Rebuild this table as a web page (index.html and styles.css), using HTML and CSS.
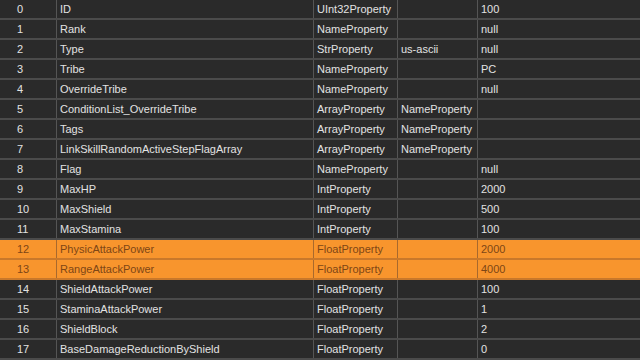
FILE: index.html
```html
<!DOCTYPE html>
<html>
<head>
<meta charset="utf-8">
<link rel="stylesheet" href="styles.css">
</head>
<body>
<div class="table">
  <div class="row"><div class="c idx">0</div><div class="c">ID</div><div class="c">UInt32Property</div><div class="c"></div><div class="c">100</div></div>
  <div class="row"><div class="c idx">1</div><div class="c">Rank</div><div class="c">NameProperty</div><div class="c"></div><div class="c">null</div></div>
  <div class="row"><div class="c idx">2</div><div class="c">Type</div><div class="c">StrProperty</div><div class="c">us-ascii</div><div class="c">null</div></div>
  <div class="row"><div class="c idx">3</div><div class="c">Tribe</div><div class="c">NameProperty</div><div class="c"></div><div class="c">PC</div></div>
  <div class="row"><div class="c idx">4</div><div class="c">OverrideTribe</div><div class="c">NameProperty</div><div class="c"></div><div class="c">null</div></div>
  <div class="row"><div class="c idx">5</div><div class="c">ConditionList_OverrideTribe</div><div class="c">ArrayProperty</div><div class="c">NameProperty</div><div class="c"></div></div>
  <div class="row"><div class="c idx">6</div><div class="c">Tags</div><div class="c">ArrayProperty</div><div class="c">NameProperty</div><div class="c"></div></div>
  <div class="row"><div class="c idx">7</div><div class="c">LinkSkillRandomActiveStepFlagArray</div><div class="c">ArrayProperty</div><div class="c">NameProperty</div><div class="c"></div></div>
  <div class="row"><div class="c idx">8</div><div class="c">Flag</div><div class="c">NameProperty</div><div class="c"></div><div class="c">null</div></div>
  <div class="row"><div class="c idx">9</div><div class="c">MaxHP</div><div class="c">IntProperty</div><div class="c"></div><div class="c">2000</div></div>
  <div class="row"><div class="c idx">10</div><div class="c">MaxShield</div><div class="c">IntProperty</div><div class="c"></div><div class="c">500</div></div>
  <div class="row"><div class="c idx">11</div><div class="c">MaxStamina</div><div class="c">IntProperty</div><div class="c"></div><div class="c">100</div></div>
  <div class="row sel"><div class="c idx">12</div><div class="c">PhysicAttackPower</div><div class="c">FloatProperty</div><div class="c"></div><div class="c">2000</div></div>
  <div class="row sel"><div class="c idx">13</div><div class="c">RangeAttackPower</div><div class="c">FloatProperty</div><div class="c"></div><div class="c">4000</div></div>
  <div class="row"><div class="c idx">14</div><div class="c">ShieldAttackPower</div><div class="c">FloatProperty</div><div class="c"></div><div class="c">100</div></div>
  <div class="row"><div class="c idx">15</div><div class="c">StaminaAttackPower</div><div class="c">FloatProperty</div><div class="c"></div><div class="c">1</div></div>
  <div class="row"><div class="c idx">16</div><div class="c">ShieldBlock</div><div class="c">FloatProperty</div><div class="c"></div><div class="c">2</div></div>
  <div class="row"><div class="c idx">17</div><div class="c">BaseDamageReductionByShield</div><div class="c">FloatProperty</div><div class="c"></div><div class="c">0</div></div>
</div>
</body>
</html>
```
FILE: styles.css
```css
html, body {
  margin: 0;
  padding: 0;
  background: #2a2a2a;
  overflow: hidden;
}
.table {
  width: 640px;
  height: 360px;
  font-family: "Liberation Sans", Arial, sans-serif;
  font-size: 11px;
  color: #e2e2e2;
}
.row {
  display: grid;
  grid-template-columns: 57px 257px 84px 80px 1fr;
  height: 20px;
  box-sizing: border-box;
  border-bottom: 2px solid #4b4b4b;
  background: #2a2a2a;
}
.c {
  border-right: 1px solid #555;
  padding-left: 3px;
  line-height: 18px;
  white-space: nowrap;
  overflow: hidden;
}
.c:last-child { border-right: none; }
.c.idx { padding-left: 17px; }
.row.sel {
  background: #f8952d;
  color: #7e4615;
  border-bottom-color: #c9782a;
}
.row.sel .c { border-right-color: #a8692d; }
```
